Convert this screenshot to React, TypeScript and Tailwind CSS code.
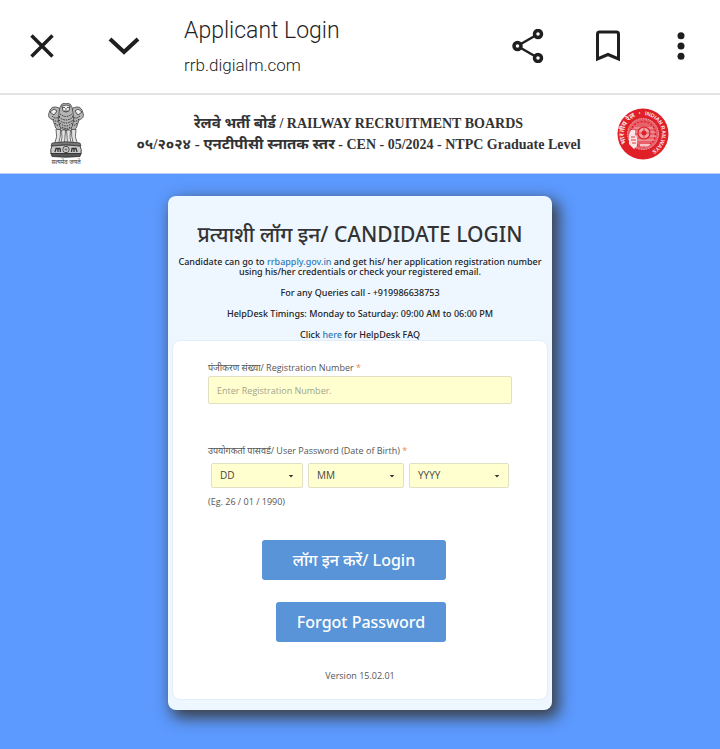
import { useState } from "react";
import type { ReactNode } from "react";

const days = Array.from({ length: 31 }, (_, i) => String(i + 1).padStart(2, "0"));
const months = Array.from({ length: 12 }, (_, i) => String(i + 1).padStart(2, "0"));
const years = Array.from({ length: 60 }, (_, i) => String(2010 - i));

function Emblem() {
  return (
    <svg viewBox="0 0 36 62" className="h-[62px] w-9" role="img" aria-label="State Emblem of India">
      <g fill="#e4e4e4" stroke="#444" strokeWidth="0.8">
        <path d="M8 26 Q10 34 6.500 41 L10.500 41 Q13 34 12.500 26Z" />
        <path d="M13.500 27 Q15 35 12.500 41 L16.500 41 L17.500 27Z" />
        <path d="M18.500 27 L19.500 41 L23.500 41 Q21 35 22.500 27Z" />
        <path d="M23.500 26 Q23 34 25.500 41 L29.500 41 Q26 34 28 26Z" />
      </g>
      <g fill="#b4b4b4" stroke="#333" strokeWidth="0.7">
        <path d="M2 7 Q4 3 8 4 L11 5 L13 10 L13 26 Q8 28 7 23 L5 17 Q-1 15 1 10Z" />
        <path d="M34 7 Q32 3 28 4 L25 5 L23 10 L23 26 Q28 28 29 23 L31 17 Q37 15 35 10Z" />
        <path d="M12 4 Q13 0 18 0 Q23 0 24 4 L25 10 Q27 17 24 24 Q18 30 12 24 Q9 17 11 10Z" />
      </g>
      <g fill="none" stroke="#2b2b2b" strokeWidth="1" strokeDasharray="1.500 1">
        <path d="M12 11 Q18 16 24 11 M11 14 Q18 20 25 14 M11 17 Q18 23 25 17 M12 20 Q18 26 24 20 M14 24 Q18 27 22 24" />
        <path d="M4 13 Q8 17 12 13 M5 16 Q8 20 12 17 M7 20 Q9 24 12 21" />
        <path d="M32 13 Q28 17 24 13 M31 16 Q28 20 24 17 M29 20 Q27 24 24 21" />
      </g>
      <g stroke="#333" strokeWidth="0.8" fill="#f0f0f0">
        <path d="M14 3 Q18 1 22 3 L21 8 Q18 10 15 8Z" />
        <path d="M14.500 4.500 H17 M19 4.500 H21.500 M18 5 V7 M16 8 H20" />
        <path d="M2 9 L6 6 L9 8 L6 12Z M34 9 L30 6 L27 8 L30 12Z" />
      </g>
      <path d="M4 40 Q18 37.500 32 40 L33 43 Q18 40.500 3 43Z" fill="#777" stroke="#333" strokeWidth="0.700" />
      <path d="M4 43 Q2 46 3 51 H33 Q34 46 32 43 Q18 41 4 43Z" fill="#c9c9c9" stroke="#333" strokeWidth="0.900" />
      <circle cx="18" cy="46.500" r="3.200" fill="#eee" stroke="#333" strokeWidth="0.900" />
      <path d="M15.500 46.500 H20.500 M18 44 V49 M16.200 44.700 L19.800 48.300 M19.800 44.700 L16.200 48.300" stroke="#555" strokeWidth="0.500" />
      <path d="M7 49 L8 45.500 L12 45.500 L12.500 49 M23.500 49 L24 45.500 L28 45.500 L29 49 M10 46 V49 M26 46 V49" fill="none" stroke="#333" strokeWidth="1.300" />
      <path d="M3 50.500 H33 L32 53.500 Q18 55 4 53.500Z" fill="#555" stroke="#222" strokeWidth="0.700" />
      <text x="18" y="61" textAnchor="middle" fontSize="6" fill="#333" className="font-['Noto_Sans',sans-serif]">
        सत्यमेव जयते
      </text>
    </svg>
  );
}

function RailwayLogo() {
  return (
    <svg viewBox="0 0 52 52" className="size-[52px] shrink-0" role="img" aria-label="Indian Railways">
      <defs>
        <path id="ring" d="M26 45 A19 19 0 1 1 26.100 45" />
      </defs>
      <circle cx="26" cy="26" r="25.500" fill="#df2029" />
      <g fill="#fbe3e4" fontWeight="700">
        <text className="font-['Noto_Sans',sans-serif]" fontSize="7">
          <textPath href="#ring" startOffset="20">भारतीय रेल</textPath>
        </text>
        <circle cx="22.500" cy="5" r="0.800" />
        <text className="font-['Liberation_Sans',sans-serif]" fontSize="5.500">
          <textPath href="#ring" startOffset="61">INDIAN RAILWAYS</textPath>
        </text>
      </g>
      <circle cx="26" cy="26" r="15.500" fill="#e6616a" stroke="#f6c3c6" strokeWidth="0.800" strokeDasharray="1.500 1" />
      <circle cx="26" cy="26" r="12.500" fill="none" stroke="#df2029" strokeWidth="1.500" strokeDasharray="2 1.500" />
      <path d="M15 24 H38 M14 28 H39 M17 32 H37 M17 20 H36" stroke="#f4bcbf" strokeWidth="0.900" />
      <circle cx="27" cy="25" r="6" fill="#f0a5a9" stroke="#df2029" strokeWidth="1.200" />
      <circle cx="27" cy="25" r="2.500" fill="#df2029" />
      <path d="M27 19 V31 M21 25 H33" stroke="#df2029" strokeWidth="0.700" />
      <path d="M12 36 V27 L14 22 H18 V27 L20 29 V38 L17 41Z" fill="#fae6e7" />
      <path d="M14 29 H18 M14 32 H19 M15 35 H19" stroke="#df2029" strokeWidth="0.900" />
      <path d="M23 36 H34 L31 38.500 H23Z" fill="#f4c6c8" />
    </svg>
  );
}

type DateSelectProps = {
  label: string;
  placeholder: string;
  options: string[];
  className: string;
};

function DateSelect({ label, placeholder, options, className }: DateSelectProps) {
  const [value, setValue] = useState("");

  return (
    <div className={`relative ${className}`}>
      <select
        aria-label={label}
        value={value}
        onChange={(e) => setValue(e.target.value)}
        className="block h-[25px] w-full appearance-none rounded-[2px] border border-[#e0e0c4] bg-[#ffffcf] px-2 text-[10px] text-[#444]"
      >
        <option value="">{placeholder}</option>
        {options.map((o) => (
          <option key={o} value={o}>
            {o}
          </option>
        ))}
      </select>
      <svg viewBox="0 0 6 3" className="pointer-events-none absolute top-3 right-[9px] h-[3px] w-[6px]">
        <path d="M0.700 0 H5.300 L3 2.600Z" fill="#333" />
      </svg>
    </div>
  );
}

function BarButton({ label, className, children }: { label: string; className: string; children: ReactNode }) {
  return (
    <button type="button" aria-label={label} className={`flex h-12 shrink-0 items-center justify-center ${className}`}>
      {children}
    </button>
  );
}

export default function App() {
  const [regNumber, setRegNumber] = useState("");

  return (
    <div className="flex min-h-screen flex-col bg-[#5c9aff] font-['Open_Sans','Noto_Sans',sans-serif]">
      {/* Browser bar */}
      <header className="flex h-[95px] items-center border-b-2 border-[#e4e4e4] bg-white pr-[15px] pb-[2px] pl-5 text-[#1f1f1f]">
        <BarButton label="Close" className="w-11">
          <svg viewBox="0 0 24 24" className="size-6" fill="none" stroke="currentColor" strokeWidth="3.500">
            <path d="M1.500 1.500 L22.500 22.500 M22.500 1.500 L1.500 22.500" />
          </svg>
        </BarButton>
        <BarButton label="Minimize" className="ml-9 w-12">
          <svg viewBox="0 0 32 18" className="h-[18px] w-8" fill="none" stroke="currentColor" strokeWidth="4">
            <path d="M2 2 L16 15 L30 2" />
          </svg>
        </BarButton>
        <div className="ml-9 min-w-0 flex-1 pt-[7px] font-[Roboto,sans-serif]">
          <p className="truncate text-[23px] leading-8 font-light">Applicant Login</p>
          <p className="truncate text-[17px] leading-9 font-light">rrb.digialm.com</p>
        </div>
        <BarButton label="Share" className="w-12">
          <svg viewBox="0 0 32 34" className="h-[34px] w-8" fill="none" stroke="currentColor" strokeWidth="3.500">
            <circle cx="5.500" cy="17" r="3.500" />
            <circle cx="26" cy="5" r="3.500" />
            <circle cx="26" cy="29" r="3.500" />
            <path d="M8.800 15 L22.700 7 M8.800 19 L22.700 27" strokeWidth="2.500" />
          </svg>
        </BarButton>
        <BarButton label="Bookmark" className="ml-8 w-12">
          <svg viewBox="0 0 26 32" className="h-8 w-[26px]" fill="none" stroke="currentColor" strokeWidth="3">
            <path d="M2.500 29 V4 Q2.500 2 4.500 2 H21.500 Q23.500 2 23.500 4 V29 L13 24.500Z" />
          </svg>
        </BarButton>
        <BarButton label="More" className="ml-[25px] w-12">
          <svg viewBox="0 0 8 28" className="h-7 w-2" fill="currentColor">
            <circle cx="4" cy="3.800" r="3.500" />
            <circle cx="4" cy="14" r="3.500" />
            <circle cx="4" cy="24.200" r="3.500" />
          </svg>
        </BarButton>
      </header>

      {/* Board banner */}
      <div className="flex items-center justify-between border-b border-[#b9d3f7] bg-white py-2 pr-[51px] pl-12">
        <div className="w-[52px] shrink-0">
          <Emblem />
        </div>
        <h1 className="text-center font-['Liberation_Serif','Noto_Sans',serif] text-sm leading-5 font-bold text-[#333]">
          <span className="text-[15px]">रेलवे भर्ती बोर्ड</span> / RAILWAY RECRUITMENT BOARDS
          <br />
          <span className="text-[15px]">०५/२०२४ - एनटीपीसी स्नातक स्तर</span> - CEN - 05/2024 - NTPC Graduate Level
        </h1>
        <RailwayLogo />
      </div>

      {/* Login card */}
      <main className="flex justify-center pt-[22px] pb-8">
        <div className="w-96 rounded-lg bg-[#eef7ff] px-1 pt-6 pb-[10px] shadow-[5px_6px_15px_2px_#3b3f46]">
          <h2 className="text-center font-['Noto_Sans',sans-serif] text-[21px] leading-7 font-medium text-[#333]">
            प्रत्याशी लॉग इन/ CANDIDATE LOGIN
          </h2>
          <div className="flex flex-col gap-[11px] pt-[9px] text-center font-['Noto_Sans',sans-serif] text-[9px] leading-[10px] font-medium text-[#222]">
            <p>
              Candidate can go to{" "}
              <a href="#" className="text-[#337ab7]">
                rrbapply.gov.in
              </a>{" "}
              and get his/ her application registration number using his/her credentials or check your registered email.
            </p>
            <p>For any Queries call - +919986638753</p>
            <p>HelpDesk Timings: Monday to Saturday: 09:00 AM to 06:00 PM</p>
            <p>
              Click{" "}
              <a href="#" className="text-[#337ab7]">
                here
              </a>{" "}
              for HelpDesk FAQ
            </p>
          </div>

          <form
            className="flex flex-col rounded-lg border border-[#e3edf7] bg-white px-[35px] pt-[19px] pb-[15px] text-[9px] text-[#555]"
            onSubmit={(e) => e.preventDefault()}
          >
            <label htmlFor="regNumber" className="leading-4">
              पंजीकरण संख्या/ Registration Number <span className="text-[#e8864a]">*</span>
            </label>
            <input
              id="regNumber"
              type="text"
              value={regNumber}
              onChange={(e) => setRegNumber(e.target.value)}
              placeholder="Enter Registration Number."
              className="h-7 w-full rounded-[2px] border border-[#e0e0c4] bg-[#ffffcf] px-2 text-[9px] text-[#444] placeholder:text-[#a3a38c]"
            />

            <fieldset className="pt-[39px]">
              <legend className="contents">
                <span className="block leading-4">
                  उपयोगकर्ता पासवर्ड/ User Password (Date of Birth) <span className="text-[#e8864a]">*</span>
                </span>
              </legend>
              <div className="flex gap-[5px] px-[3px] pt-1">
                <DateSelect label="Day" placeholder="DD" options={days} className="w-[92px]" />
                <DateSelect label="Month" placeholder="MM" options={months} className="w-24" />
                <DateSelect label="Year" placeholder="YYYY" options={years} className="flex-1" />
              </div>
            </fieldset>
            <p className="pt-[6px] leading-4">(Eg. 26 / 01 / 1990)</p>

            <div className="flex flex-col items-end gap-[22px] pt-[30px] pr-[66px] font-['Noto_Sans',sans-serif]">
              <button
                type="submit"
                className="h-10 w-[184px] rounded-[3px] bg-[#5894d7] text-base font-medium text-white"
              >
                लॉग इन करें/ Login
              </button>
              <button
                type="button"
                className="h-10 w-[170px] rounded-[3px] bg-[#5894d7] text-base font-medium text-white"
              >
                Forgot Password
              </button>
            </div>

            <p className="pt-[26px] text-center leading-4">Version 15.02.01</p>
          </form>
        </div>
      </main>
    </div>
  );
}
